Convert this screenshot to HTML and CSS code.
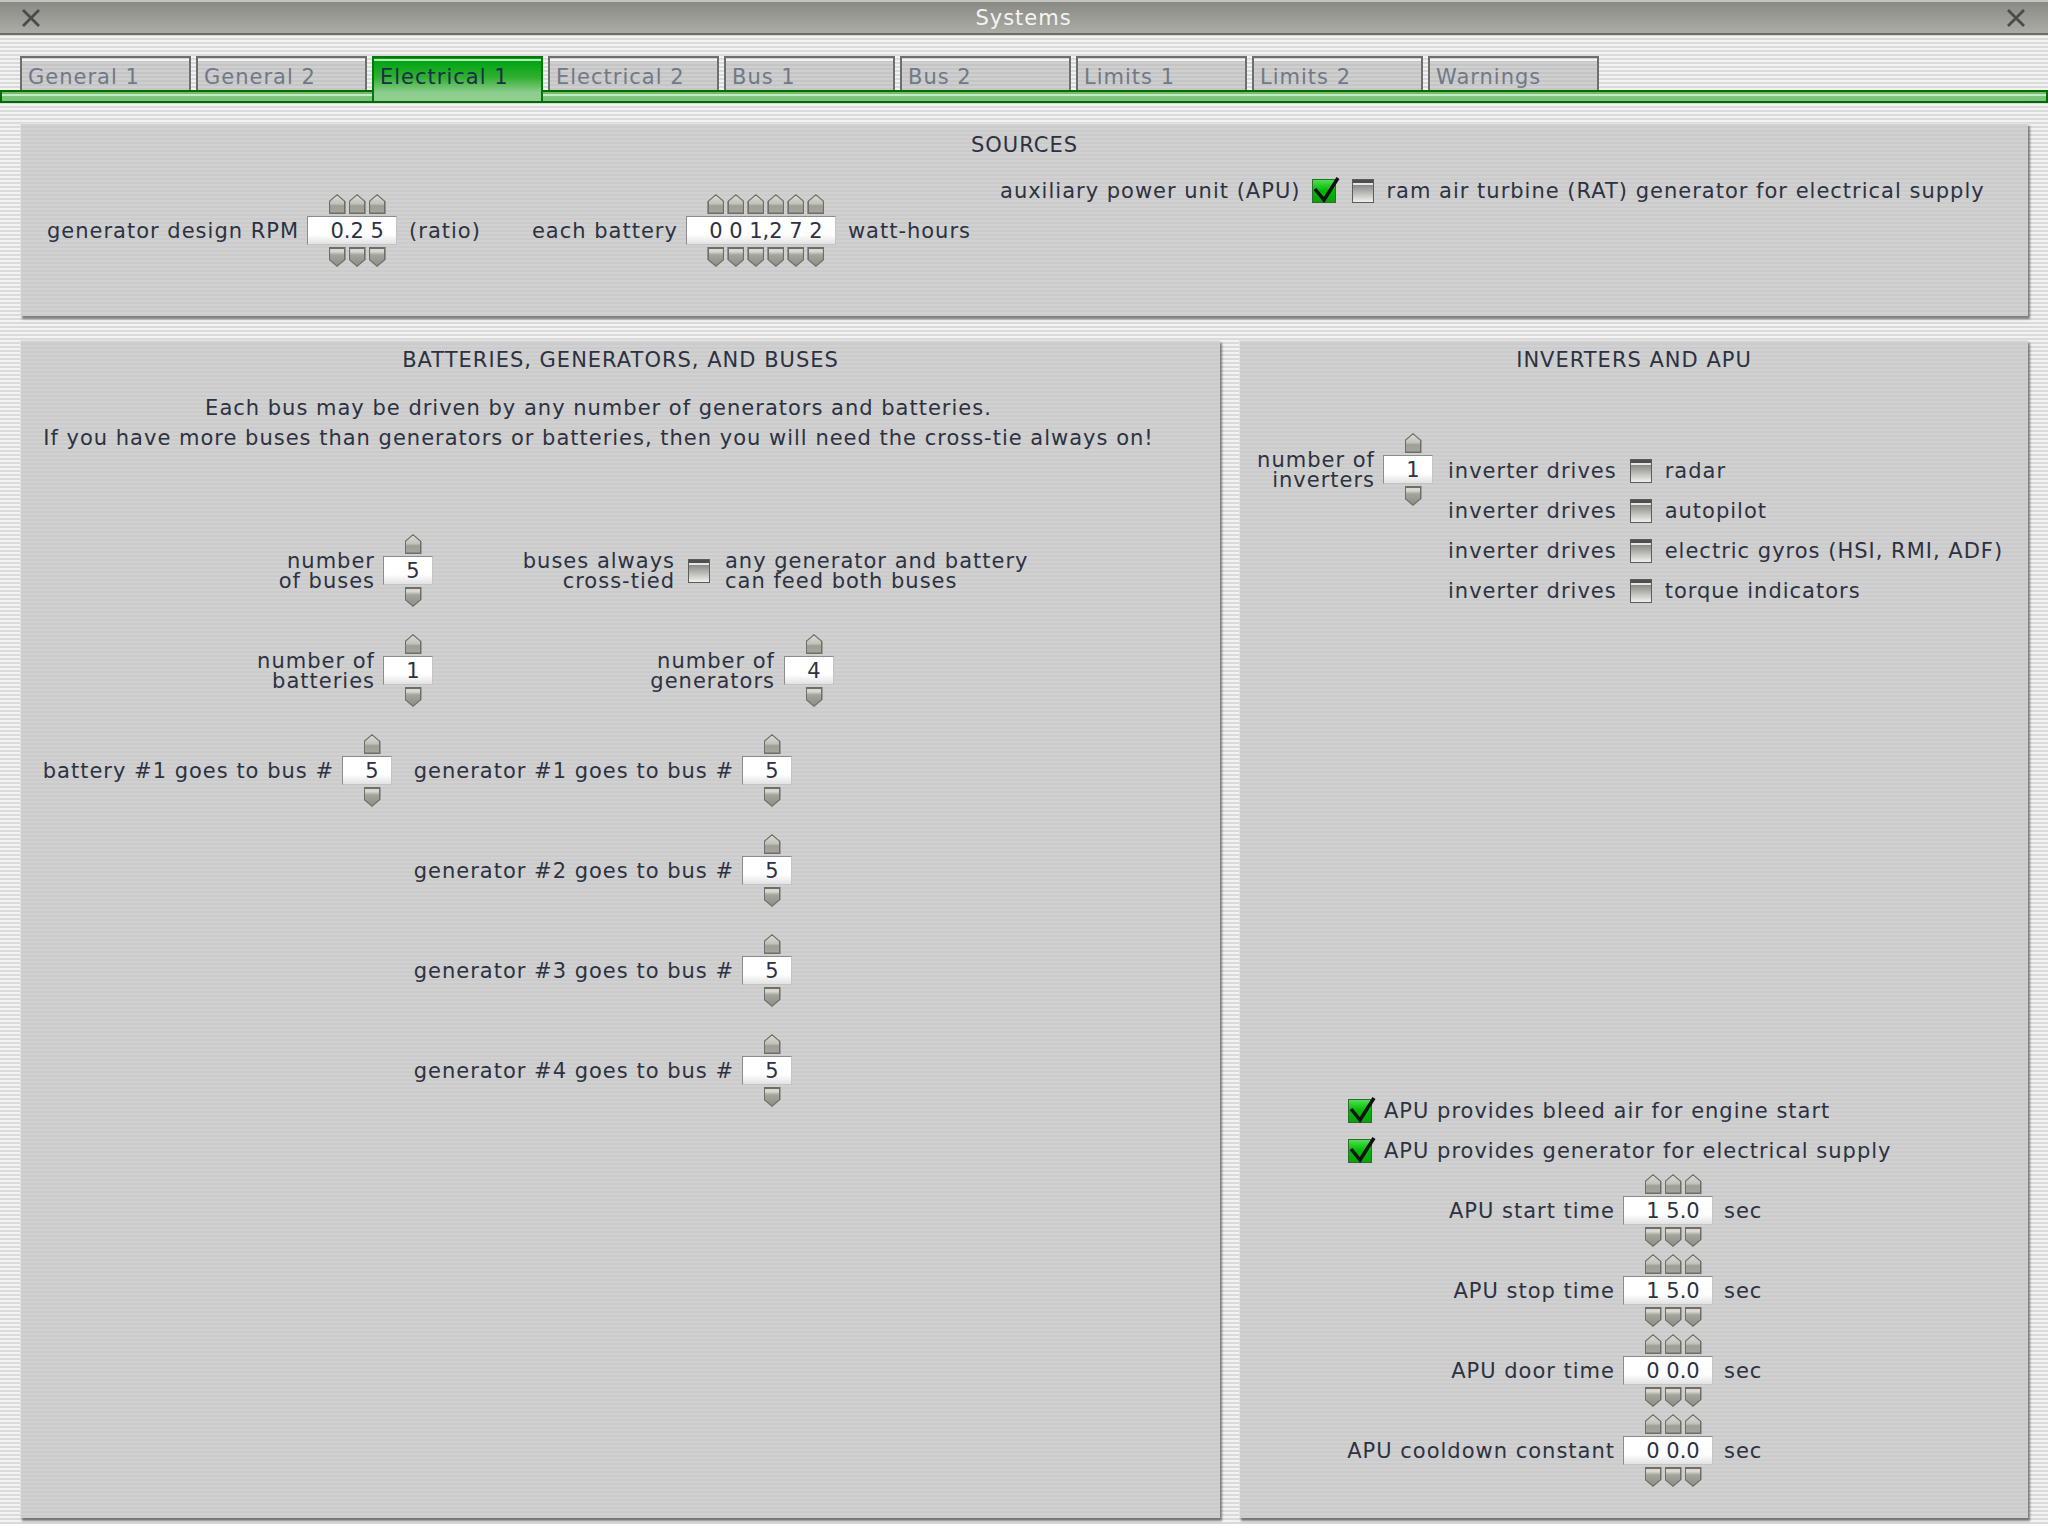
FILE: index.html
```html
<!DOCTYPE html>
<html lang="en">
<head>
    <meta charset="UTF-8">
    <title>Systems</title>
    <link rel="stylesheet" href="styles.css">
</head>
<body>
    <div class="titlebar">
        <svg class="x" viewBox="0 0 20 20"><path d="M2 2L18 18M18 2L2 18"/></svg>
        <span class="title">Systems</span>
        <svg class="x" viewBox="0 0 20 20"><path d="M2 2L18 18M18 2L2 18"/></svg>
    </div>

    <div class="tabbar">
        <div class="tabs">
            <div class="tab">General 1</div>
            <div class="tab">General 2</div>
            <div class="tab on">Electrical 1</div>
            <div class="tab">Electrical 2</div>
            <div class="tab">Bus 1</div>
            <div class="tab">Bus 2</div>
            <div class="tab">Limits 1</div>
            <div class="tab">Limits 2</div>
            <div class="tab">Warnings</div>
        </div>
        <div class="tabline"></div>
    </div>

    <div class="main">
        <div class="panel sources">
            <div class="ptitle">SOURCES</div>
            <div class="srow">
                <div class="fld">
                    <span>generator design RPM</span>
                    <div class="spin" data-v="0. 2 5"></div>
                    <span class="unit">(ratio)</span>
                </div>
                <div class="fld batt">
                    <span>each battery</span>
                    <div class="spin" data-v="0 0 1, 2 7 2"></div>
                    <span class="unit">watt-hours</span>
                </div>
                <div class="apu-src">
                    <span>auxiliary power unit (APU)</span>
                    <span class="cb on"><svg viewBox="0 0 28 28"><path d="M2 13L11 24L25 2"/></svg></span>
                    <span class="cb rat"></span>
                    <span>ram air turbine (RAT) generator for electrical supply</span>
                </div>
            </div>
        </div>

        <div class="lower">
            <div class="panel buses">
                <div class="ptitle">BATTERIES, GENERATORS, AND BUSES</div>
                <p class="note">Each bus may be driven by any number of generators and batteries.<br>If you have more buses than generators or batteries, then you will need the cross-tie always on!</p>

                <div class="rows">
                    <div class="row">
                        <div class="cell c-a"><span class="lab2">number<br>of buses</span><div class="spin" data-v="5"></div></div>
                        <div class="cell c-b"><span class="lab2">buses always<br>cross-tied</span><span class="cb"></span></div>
                        <span class="lab2 left tie">any generator and battery<br>can feed both buses</span>
                    </div>
                    <div class="row">
                        <div class="cell c-a"><span class="lab2">number of<br>batteries</span><div class="spin" data-v="1"></div></div>
                        <div class="cell c-c"><span class="lab2">number of<br>generators</span><div class="spin" data-v="4"></div></div>
                    </div>
                    <div class="row">
                        <div class="cell c-d"><span>battery #1 goes to bus #</span><div class="spin" data-v="5"></div></div>
                        <div class="cell c-e"><span>generator #1 goes to bus #</span><div class="spin" data-v="5"></div></div>
                    </div>
                    <div class="row">
                        <div class="cell c-f"><span>generator #2 goes to bus #</span><div class="spin" data-v="5"></div></div>
                    </div>
                    <div class="row">
                        <div class="cell c-f"><span>generator #3 goes to bus #</span><div class="spin" data-v="5"></div></div>
                    </div>
                    <div class="row">
                        <div class="cell c-f"><span>generator #4 goes to bus #</span><div class="spin" data-v="5"></div></div>
                    </div>
                </div>
            </div>

            <div class="panel inv">
                <div class="ptitle">INVERTERS AND APU</div>
                <div class="invs">
                    <div class="cell c-g"><span class="lab2">number of<br>inverters</span><div class="spin" data-v="1"></div></div>
                    <div class="drives">
                        <div class="drv"><span>inverter drives</span><span class="cb"></span><span>radar</span></div>
                        <div class="drv"><span>inverter drives</span><span class="cb"></span><span>autopilot</span></div>
                        <div class="drv"><span>inverter drives</span><span class="cb"></span><span>electric gyros (HSI, RMI, ADF)</span></div>
                        <div class="drv"><span>inverter drives</span><span class="cb"></span><span>torque indicators</span></div>
                    </div>
                </div>

                <div class="apu">
                    <div class="chk"><span class="cb on"><svg viewBox="0 0 28 28"><path d="M2 13L11 24L25 2"/></svg></span><span>APU provides bleed air for engine start</span></div>
                    <div class="chk"><span class="cb on"><svg viewBox="0 0 28 28"><path d="M2 13L11 24L25 2"/></svg></span><span>APU provides generator for electrical supply</span></div>
                    <div class="arows">
                        <div class="arow"><div class="cell c-h"><span>APU start time</span><div class="spin" data-v="1 5. 0"></div></div><span class="unit">sec</span></div>
                        <div class="arow"><div class="cell c-h"><span>APU stop time</span><div class="spin" data-v="1 5. 0"></div></div><span class="unit">sec</span></div>
                        <div class="arow"><div class="cell c-h"><span>APU door time</span><div class="spin" data-v="0 0. 0"></div></div><span class="unit">sec</span></div>
                        <div class="arow"><div class="cell c-h"><span>APU cooldown constant</span><div class="spin" data-v="0 0. 0"></div></div><span class="unit">sec</span></div>
                    </div>
                </div>
            </div>
        </div>
    </div>

    <script>
        // each token of data-v is one digit with its own up/down arrow; trailing . or , sits between digits
        document.querySelectorAll('.spin').forEach(function (spin) {
            var digits = spin.dataset.v.split(' ');
            var up = '', box = '', dn = '';
            digits.forEach(function (d) {
                up += '<i></i>';
                dn += '<i></i>';
                box += '<span class="dg">' + d.charAt(0) + (d.length > 1 ? '<span class="sep">' + d.slice(1) + '</span>' : '') + '</span>';
            });
            spin.innerHTML = '<div class="arr up">' + up + '</div><div class="box">' + box + '</div><div class="arr dn">' + dn + '</div>';
        });
    </script>
</body>
</html>
```

FILE: styles.css
```css
body { margin: 0; height: 1524px; display: flex; flex-direction: column; overflow: hidden; font-family: "DejaVu Sans", sans-serif; font-size: 21px; letter-spacing: 1px; color: #2c3242; background: repeating-linear-gradient(#f3f3f3 0 2px, #dadada 2px 4px); }

/* window title */
.titlebar { height: 35px; box-sizing: border-box; display: flex; align-items: center; justify-content: space-between; padding: 3px 22px 0 21px; background: linear-gradient(#c4c4be 0 2px, #8a8a84 2px, #acaca6); border-bottom: 2px solid #6c6c66; }
.titlebar .x { width: 20px; height: 20px; stroke: #4a4a48; stroke-width: 2.8; fill: none; }
.titlebar .title { color: #f4f4f4; }

/* tabs */
.tabbar { height: 68px; flex: none; }
.tabs { display: flex; align-items: flex-start; gap: 5px; height: 34px; padding: 21px 0 0 20px; }
.tab { width: 171px; height: 34px; box-sizing: border-box; padding: 5px 0 0 6px; line-height: 28px; color: #717888; border: 2px solid #6e6e6e; border-bottom: 0; background: linear-gradient(transparent 0 1px, #f4f4f4 1px 3px, transparent 3px), repeating-linear-gradient(#cfcfcf 0 2px, #c5c5c5 2px 4px); }
.tab.on { height: 45px; position: relative; z-index: 1; color: #1c2e4a; border-color: #00780a; background: linear-gradient(#00a010 0 1px, #b4eab4 1px 3px, #00a414 3px, #30b030 45%, #8ccc8c 80%, #90d090); }
.tabline { height: 13px; box-sizing: border-box; border: 2px solid #006c00; background: linear-gradient(#6cbc6c 0 2px, #c4eac4 2px 4px, #7cc47c 4px); }

/* panels */
.main { flex: 1; min-height: 0; display: flex; flex-direction: column; gap: 24px; padding: 20px 20px 6px; }
.panel { box-sizing: border-box; border-top: 1px solid #e6e6e6; border-left: 1px solid #e2e2e2; background: repeating-linear-gradient(#d1d1d1 0 2px, #cbcbcb 2px 4px); box-shadow: 2px 3px 2px rgba(50, 50, 50, 0.6); }
.ptitle { line-height: 30px; text-align: center; }
.lower { flex: 1; display: flex; gap: 19px; min-height: 0; }

.sources { height: 193px; flex: none; padding-top: 6px; }
.srow { display: flex; align-items: flex-start; padding-left: 26px; }
.fld { display: flex; align-items: center; gap: 8px; margin-top: 34px; }
.fld.batt { margin-left: 51px; }
.unit { margin-left: 4px; }
.apu-src { display: flex; align-items: center; gap: 12px; height: 30px; margin: 16px 0 0 29px; }
.apu-src .rat { margin-left: 4px; }

.buses { width: 1200px; padding-top: 4px; }
.note { margin: 18px 44px 0 0; line-height: 30px; text-align: center; }
.rows { display: flex; flex-direction: column; gap: 27px; margin-top: 81px; }
.row { display: flex; align-items: center; }

.cell { display: flex; align-items: center; justify-content: flex-end; gap: 8px; flex: none; }
.lab2 { line-height: 20px; text-align: right; }
.lab2.left { text-align: left; }
.c-a { width: 412px; }
.c-b { width: 277px; gap: 13px; }
.tie { margin-left: 15px; }
.c-c { width: 401px; gap: 9px; }
.c-d { width: 371px; }
.c-e { width: 400px; }
.c-f { width: 771px; }

.inv { flex: 1; display: flex; flex-direction: column; padding: 4px 0 31px; }
.invs { display: flex; align-items: flex-start; margin-top: 58px; }
.c-g { width: 193px; }
.drives { margin: 18px 0 0 15px; }
.drv { display: flex; align-items: center; gap: 13px; height: 40px; }
.apu { margin-top: auto; }
.chk { display: flex; align-items: center; gap: 12px; height: 40px; margin-left: 108px; }
.arows { display: flex; flex-direction: column; gap: 7px; margin-top: 3px; }
.arow { display: flex; align-items: center; }
.c-h { width: 473px; }
.arow .unit { margin-left: 11px; }

/* digit spinner */
.spin { display: flex; flex-direction: column; gap: 2px; flex: none; }
.arr { display: flex; height: 20px; padding: 0 10px 0 20px; }
.arr i { width: 17px; height: 20px; margin: 0 1.5px; background: #6e6e66; }
.arr i::after { content: ""; display: block; margin: 1.5px; height: 17px; }
.up i, .up i::after { clip-path: polygon(50% 0, 100% 36%, 100% 100%, 0 100%, 0 36%); }
.up i::after { background: linear-gradient(#dadad4, #c2c2bb 45%, #9e9e96 58%, #a6a69e); }
.dn i, .dn i::after { clip-path: polygon(0 0, 100% 0, 100% 64%, 50% 100%, 0 64%); }
.dn i::after { background: linear-gradient(#d8d8d2 0 15%, #a4a49c 35%, #8e8e86); }
.box { display: flex; align-items: center; height: 29px; box-sizing: border-box; padding: 0 9px 0 19px; border: 1px solid #8c8c8c; border-right-color: #c4c4c4; border-bottom-color: #c4c4c4; background: linear-gradient(#fff 65%, #e2e2e2); letter-spacing: 0; color: #2c3242; }
.dg { width: 20px; text-align: center; }
.sep { display: inline-block; width: 0; }

/* checkboxes */
.cb { width: 22px; height: 24px; box-sizing: border-box; flex: none; border: 1px solid #5c5c5c; background: linear-gradient(#4e4e4e 0 3px, #e6e6e6 3px 5px, #8a8a86 5px, #f0f0ec); }
.cb.on { width: 24px; position: relative; border-color: #2c6c2c; background: linear-gradient(#50e050, #00b800 50%, #10a010); }
.cb svg { position: absolute; left: 0; top: -4px; width: 28px; height: 28px; overflow: visible; fill: none; stroke: #101010; stroke-width: 3.5; }
```
